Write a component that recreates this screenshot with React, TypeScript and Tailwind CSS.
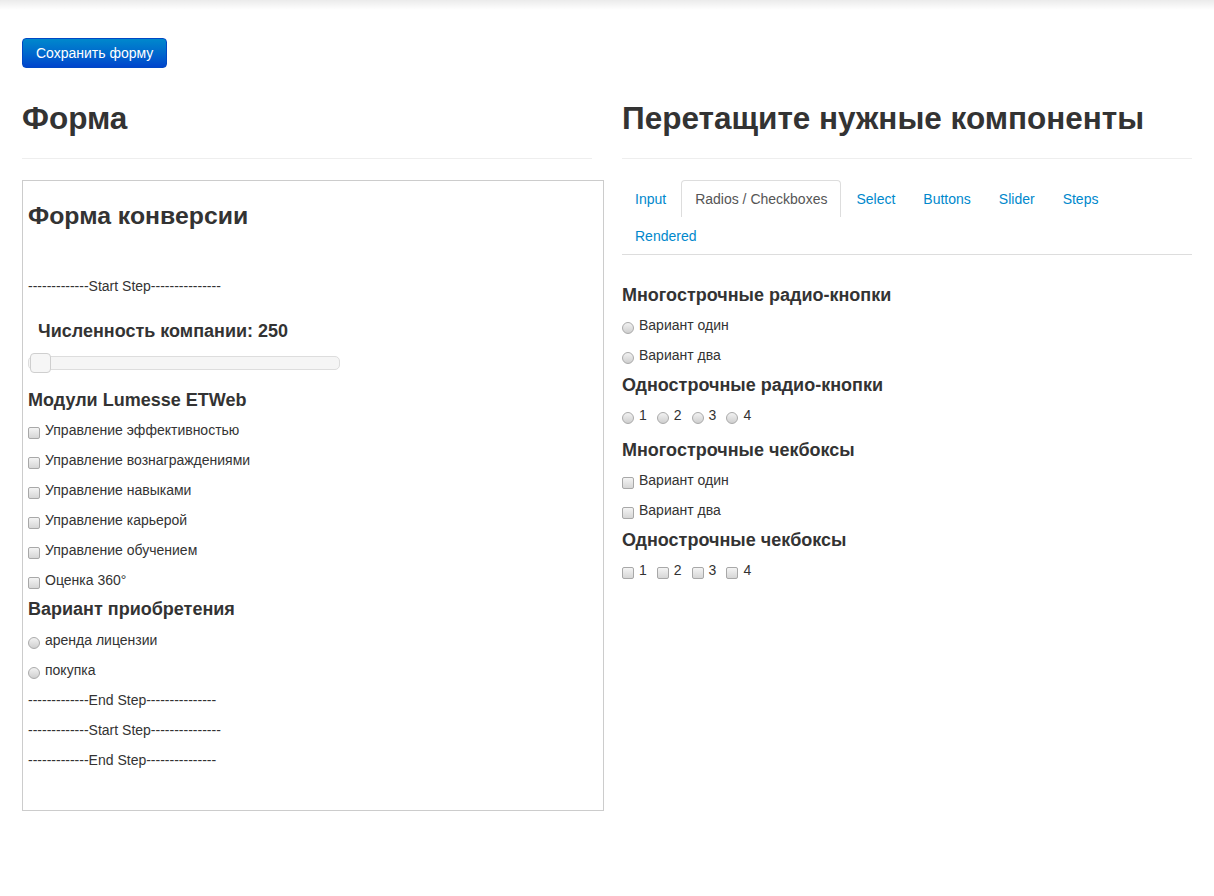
import React from 'react';

const tabs = ['Input', 'Radios / Checkboxes', 'Select', 'Buttons', 'Slider', 'Steps', 'Rendered'];

function Checkbox() {
  return (
    <span className="mr-[5px] mt-[6px] inline-block h-[12px] w-[12px] shrink-0 rounded-[2px] border border-[#a8a8a8] bg-linear-to-b from-[#f4f4f4] to-[#d6d6d6]" />
  );
}

function Radio() {
  return (
    <span className="mr-[5px] mt-[6px] inline-block h-[12px] w-[12px] shrink-0 rounded-full border border-[#aaaaaa] bg-linear-to-b from-[#f2f2f2] to-[#cfcfcf]" />
  );
}

function Row({ children }: { children: React.ReactNode }) {
  return <div className="flex h-[30px] items-center">{children}</div>;
}

function Step({ end }: { end?: boolean }) {
  return <Row>{end ? '-------------End Step---------------' : '-------------Start Step---------------'}</Row>;
}

function SectionTitle({ children, className = '' }: { children: React.ReactNode; className?: string }) {
  return <h3 className={`text-[18px] font-bold leading-[24px] ${className}`}>{children}</h3>;
}

export default function App() {
  return (
    <div className="min-h-[896px] bg-white font-['Liberation_Sans',Arial,sans-serif] text-[14px] leading-[20px] text-[#333]">
      <div className="h-[10px] bg-linear-to-b from-[#ebebeb] to-white" />
      <div className="mx-auto w-[1170px]">
        <button className="mt-[28px] h-[30px] rounded-[4px] border border-[#0048c4] bg-linear-to-b from-[#0088cc] to-[#0044cc] px-[13px] text-[14px] text-white">
          Сохранить форму
        </button>

        <div className="grid grid-cols-2 gap-[30px]">
          {/* form preview */}
          <div>
            <div className="mt-[30px] border-b border-[#eeeeee] pb-[20px]">
              <h1 className="text-[31.5px] font-bold leading-[40px]">Форма</h1>
            </div>
            <div className="mt-[21px] h-[631px] w-[582px] border border-[#cccccc] px-[5px]">
              <h2 className="mt-[20px] text-[24.8px] font-bold leading-[30px]">Форма конверсии</h2>
              <div className="mt-[40px]">
                <Step />
              </div>
              <h3 className="ml-[10px] mt-[18px] text-[18px] font-bold leading-[24px]">Численность компании: 250</h3>
              <div className="mt-[9px] flex h-[21px] w-[312px] items-center">
                <div className="flex h-[14px] w-full items-center rounded-[5px] border border-[#dddddd] bg-[#f5f5f5]">
                  <div className="ml-[1px] h-[20px] w-[21px] rounded-[4px] border border-[#cfcfcf] bg-[#f6f6f6]" />
                </div>
              </div>
              <SectionTitle className="mt-[15px]">Модули Lumesse ETWeb</SectionTitle>
              <div className="mt-[3px]">
                {['Управление эффективностью', 'Управление вознаграждениями', 'Управление навыками', 'Управление карьерой', 'Управление обучением', 'Оценка 360°'].map((t) => (
                  <Row key={t}>
                    <Checkbox />
                    {t}
                  </Row>
                ))}
              </div>
              <SectionTitle className="mt-[2px]">Вариант приобретения</SectionTitle>
              <div className="mt-[4px]">
                {['аренда лицензии', 'покупка'].map((t) => (
                  <Row key={t}>
                    <Radio />
                    {t}
                  </Row>
                ))}
                <Step end />
                <Step />
                <Step end />
              </div>
            </div>
          </div>

          {/* components palette */}
          <div>
            <div className="mt-[30px] border-b border-[#eeeeee] pb-[20px]">
              <h1 className="text-[31.5px] font-bold leading-[40px]">Перетащите нужные компоненты</h1>
            </div>
            <ul className="mt-[21px] flex flex-wrap border-b border-[#dddddd]">
              {tabs.map((t) => (
                <li key={t}>
                  <a
                    href="#"
                    onClick={(e) => e.preventDefault()}
                    className={
                      t === 'Radios / Checkboxes'
                        ? 'mr-[2px] flex h-[37px] items-center rounded-t-[4px] border border-b-0 border-[#dddddd] bg-white px-[13px] text-[#555555]'
                        : 'mr-[2px] flex h-[37px] items-center px-[13px] text-[#0088cc]'
                    }
                  >
                    {t}
                  </a>
                </li>
              ))}
            </ul>

            <SectionTitle className="mt-[28px]">Многострочные радио-кнопки</SectionTitle>
            <div className="mt-[3px]">
              {['Вариант один', 'Вариант два'].map((t) => (
                <Row key={t}>
                  <Radio />
                  {t}
                </Row>
              ))}
            </div>
            <SectionTitle className="mt-[3px]">Однострочные радио-кнопки</SectionTitle>
            <div className="mt-[3px] flex h-[30px] items-center">
              {['1', '2', '3', '4'].map((t) => (
                <span key={t} className="mr-[10px] flex items-center">
                  <Radio />
                  {t}
                </span>
              ))}
            </div>
            <SectionTitle className="mt-[8px]">Многострочные чекбоксы</SectionTitle>
            <div className="mt-[3px]">
              {['Вариант один', 'Вариант два'].map((t) => (
                <Row key={t}>
                  <Checkbox />
                  {t}
                </Row>
              ))}
            </div>
            <SectionTitle className="mt-[3px]">Однострочные чекбоксы</SectionTitle>
            <div className="mt-[3px] flex h-[30px] items-center">
              {['1', '2', '3', '4'].map((t) => (
                <span key={t} className="mr-[10px] flex items-center">
                  <Checkbox />
                  {t}
                </span>
              ))}
            </div>
          </div>
        </div>
      </div>
    </div>
  );
}
